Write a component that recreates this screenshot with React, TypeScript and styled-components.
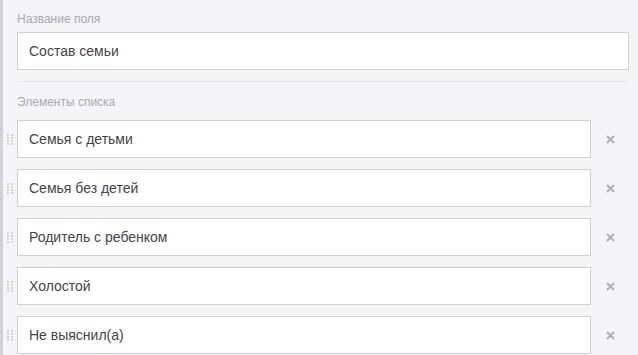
import React from "react";
import styled, { createGlobalStyle } from "styled-components";

const Global = createGlobalStyle`
  html, body { margin: 0; padding: 0; background: #f4f4f6; }
  body { font-family: "Liberation Sans", Arial, sans-serif; }
  * { box-sizing: border-box; }
`;

const Panel = styled.div`
  width: 638px;
  height: 355px;
  overflow: hidden;
  background: #f4f4f6;
  border-left: 3px solid #d2d2d4;
  padding: 12px 9px 0 0;
  display: flex;
  flex-direction: column;
`;

const Section = styled.div`
  padding-left: 14px;
`;

const Label = styled.div<{ $top?: number; $bottom?: number }>`
  font-size: 12px;
  line-height: 14px;
  color: #a9a9ad;
  margin-top: ${(p) => p.$top ?? 0}px;
  margin-bottom: ${(p) => p.$bottom ?? 6}px;
  padding-left: 14px;
`;

const TextInput = styled.div`
  height: 38px;
  background: #fff;
  border: 1px solid #cfcfd2;
  padding: 0 11px;
  display: flex;
  align-items: center;
  font-size: 14px;
  color: #444448;
  white-space: nowrap;
`;

const Divider = styled.div`
  height: 1px;
  background: #e6e6e9;
  margin: 11px 0 0 14px;
`;

const List = styled.div`
  display: flex;
  flex-direction: column;
  gap: 11px;
`;

const Row = styled.div`
  display: grid;
  grid-template-columns: 14px 1fr 38px;
  align-items: center;
`;

const Handle = styled.div`
  display: flex;
  justify-content: center;
  align-items: center;
  cursor: grab;
`;

const Remove = styled.button`
  border: 0;
  background: transparent;
  padding: 0;
  height: 38px;
  display: flex;
  align-items: center;
  justify-content: center;
  cursor: pointer;
`;

const Dots = () => (
  <svg width="6" height="11" viewBox="0 0 6 11">
    {[0, 3, 6, 9].map((y) =>
      [0, 4].map((x) => (
        <rect key={`${x}-${y}`} x={x} y={y} width="2" height="2" fill="#d3d3d6" />
      ))
    )}
  </svg>
);

const Cross = () => (
  <svg width="9" height="9" viewBox="0 0 9 9">
    <path d="M1 1L8 8M8 1L1 8" stroke="#b0b0b4" strokeWidth="2" strokeLinecap="butt" />
  </svg>
);

const items = [
  "Семья с детьми",
  "Семья без детей",
  "Родитель с ребенком",
  "Холостой",
  "Не выяснил(а)",
];

export default function App() {
  return (
    <>
      <Global />
      <Panel>
        <Label>Название поля</Label>
        <Section>
          <TextInput>Состав семьи</TextInput>
        </Section>
        <Divider />
        <Label $top={13} $bottom={11}>Элементы списка</Label>
        <List>
          {items.map((t) => (
            <Row key={t}>
              <Handle>
                <Dots />
              </Handle>
              <TextInput>{t}</TextInput>
              <Remove aria-label="Удалить">
                <Cross />
              </Remove>
            </Row>
          ))}
        </List>
      </Panel>
    </>
  );
}
